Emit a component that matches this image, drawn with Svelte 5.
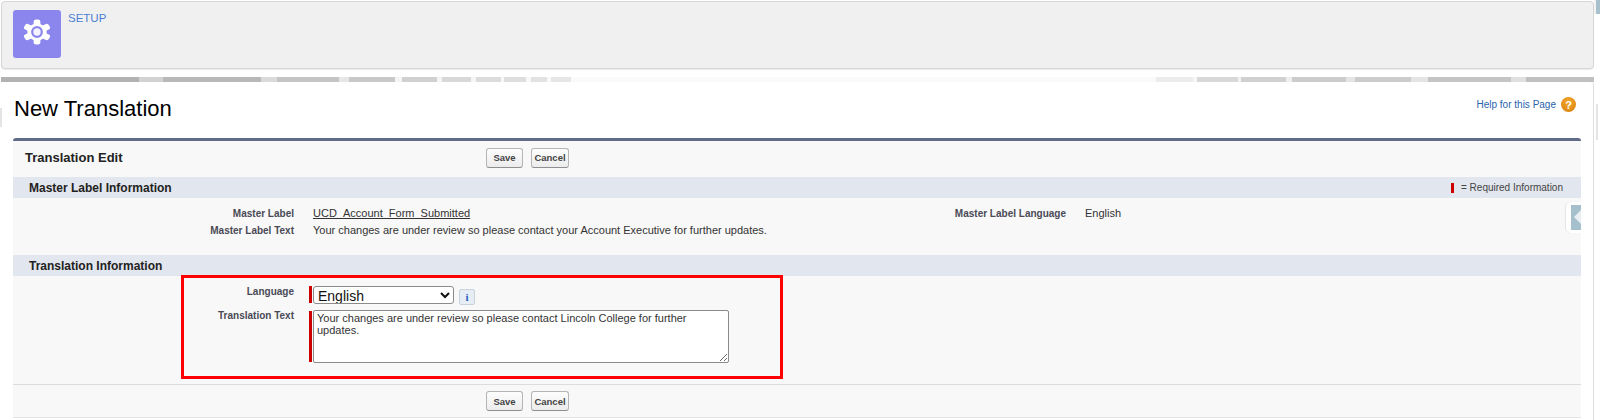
<script>
  const stripeNote = '= Required Information';
  const lobes = [0, 60, 120, 180, 240, 300];
</script>

<div class="page">
  <span class="corner-tab"></span>
  <span class="edge edge--left"></span>
  <span class="edge edge--right"></span>

  <header class="setup">
    <div class="setup__icon">
      <svg viewBox="-16 -16 32 32" width="32" height="32" aria-hidden="true">
        <g fill="#fff" transform="scale(1.13 1)">
          <circle r="8.6" />
          {#each lobes as angle}
            <rect x="-3" y="-12.5" width="6" height="7" rx="2.2" transform="rotate({angle})" />
          {/each}
        </g>
        <circle r="4.8" fill="#f4f3ff" stroke="#8b85ee" stroke-width="2.2" />
      </svg>
    </div>
    <a class="setup__link" href="#setup">SETUP</a>
  </header>

  <div class="stripes"></div>

  <main class="card">
    <div class="title-row">
      <h1>New Translation</h1>
      <div class="help">
        <a href="#help">Help for this Page</a>
        <span class="help__icon">?</span>
      </div>
    </div>

    <section class="block">
      <div class="buttons buttons--top">
        <h2>Translation Edit</h2>
        <div class="buttons__group">
          <button type="button" class="save">Save</button>
          <button type="button" class="cancel">Cancel</button>
        </div>
      </div>

      <div class="section-head">
        <h3>Master Label Information</h3>
        <span class="legend"><i></i>{stripeNote}</span>
      </div>

      <div class="details">
        <span class="label">Master Label</span>
        <a class="value value--link" href="#label">UCD_Account_Form_Submitted</a>
        <span class="label">Master Label Language</span>
        <span class="value">English</span>
        <span class="label">Master Label Text</span>
        <span class="value value--wide">Your changes are under review so please contact your Account Executive for further updates.</span>
        <span class="handle"><b></b></span>
      </div>

      <div class="section-head">
        <h3>Translation Information</h3>
      </div>

      <div class="form">
        <span class="label label--form">Language</span>
        <div class="field">
          <i class="req req--select"></i>
          <select>
            <option>English</option>
          </select>
          <span class="info">i</span>
        </div>
        <span class="label label--form">Translation Text</span>
        <div class="field">
          <i class="req req--text"></i>
          <textarea>Your changes are under review so please contact Lincoln College for further updates.</textarea>
        </div>
        <div class="highlight"></div>
      </div>

      <div class="buttons buttons--bottom">
        <div class="buttons__group">
          <button type="button" class="save">Save</button>
          <button type="button" class="cancel">Cancel</button>
        </div>
      </div>
    </section>
  </main>
</div>

<style>
  :global(body) {
    margin: 0;
    background: #fff;
    font-family: 'Liberation Sans', Arial, sans-serif;
  }

  .page {
    position: relative;
    width: 1600px;
    height: 420px;
    overflow: hidden;
    box-sizing: border-box;
    padding: 1px 6px 0 1px;
  }

  .corner-tab {
    position: absolute;
    top: 0;
    right: 0;
    width: 4px;
    height: 14px;
    background: #a9c1cc;
    border-left: 2px solid #f3f3f3;
  }

  .edge {
    position: absolute;
    background: #e4e4e4;
  }

  .edge--left {
    top: 108px;
    left: 0;
    width: 2px;
    height: 19px;
  }

  .edge--right {
    top: 104px;
    right: 2px;
    width: 2px;
    height: 36px;
  }

  .setup {
    display: flex;
    gap: 7px;
    height: 68px;
    box-sizing: border-box;
    padding: 8px 11px;
    background: #f0f0f0;
    border: 1px solid #d6d6d6;
    border-radius: 4px;
    box-shadow: 0 1px 1px rgba(0, 0, 0, 0.08);
  }

  .setup__icon {
    display: flex;
    align-items: center;
    justify-content: center;
    width: 48px;
    height: 48px;
    box-sizing: border-box;
    padding-bottom: 4px;
    background: #8b85ee;
    border-radius: 3px;
  }

  .setup__link {
    color: #4a7fd4;
    font-size: 11.5px;
    line-height: 16px;
    text-decoration: none;
  }

  .stripes {
    height: 5px;
    margin-top: 8px;
    background: linear-gradient(
      90deg,
      #b2b2b2 0 138px,
      #d2d2d2 138px 162px,
      #b8b8b8 162px 260px,
      #dadada 260px 276px,
      #c4c4c4 276px 338px,
      #e6e6e6 338px 348px,
      #c8c8c8 348px 394px,
      #f4f4f4 394px 401px,
      #d0d0d0 401px 436px,
      #f4f4f4 436px 441px,
      #d8d8d8 441px 470px,
      #f6f6f6 470px 475px,
      #dcdcdc 475px 500px,
      #f8f8f8 500px 503px,
      #dedede 503px 525px,
      #f8f8f8 525px 530px,
      #e2e2e2 530px 546px,
      #f8f8f8 546px 550px,
      #e6e6e6 550px 570px,
      #fafafa 570px 1155px,
      #ececec 1155px 1192px,
      #f6f6f6 1192px 1196px,
      #d8d8d8 1196px 1237px,
      #f2f2f2 1237px 1240px,
      #d0d0d0 1240px 1285px,
      #eee 1285px 1291px,
      #ccc 1291px 1345px,
      #e4e4e4 1345px 1354px,
      #ccc 1354px 1410px,
      #e4e4e4 1410px 1427px,
      #c4c4c4 1427px 1510px,
      #e0e0e0 1510px 1525px,
      #c0c0c0 1525px
    );
  }

  .card {
    height: 338px;
    box-sizing: border-box;
    padding: 0 12px;
    background: #fff;
    border-radius: 4px 4px 0 0;
    border-right: 1px solid #ddd;
  }

  .title-row {
    display: flex;
    align-items: flex-start;
    justify-content: space-between;
    height: 56px;
    padding-left: 1px;
  }

  h1 {
    margin: 14px 0 0;
    color: #000;
    font-size: 22px;
    font-weight: 400;
    line-height: 26px;
  }

  .help {
    display: flex;
    align-items: center;
    gap: 5px;
    margin: 15px 5px 0 0;
    font-size: 10px;
  }

  .help a {
    color: #2a63ab;
    text-decoration: none;
  }

  .help__icon {
    display: flex;
    align-items: center;
    justify-content: center;
    width: 15px;
    height: 15px;
    color: #fff;
    font-size: 11px;
    font-weight: 700;
    background: radial-gradient(circle at 50% 35%, #f2a72e, #d97f0a);
    border-radius: 50%;
  }

  .block {
    background: #f8f8f8;
    border-top: 3px solid #5f6b87;
    border-radius: 3px 3px 0 0;
    border-bottom: 1px solid #e4e4e4;
  }

  .buttons {
    display: flex;
    align-items: center;
    box-sizing: border-box;
    padding-left: 473px;
  }

  .buttons--top {
    height: 33px;
    margin-bottom: 3px;
    padding-left: 12px;
  }

  .buttons--top h2 {
    width: 461px;
    margin: 0;
    color: #222;
    font-size: 13px;
    font-weight: 700;
  }

  .buttons--bottom {
    height: 33px;
    border-top: 1px solid #dcdcdc;
  }

  .buttons__group {
    display: flex;
    gap: 8px;
  }

  button {
    height: 20px;
    padding: 0;
    color: #444;
    font-family: inherit;
    font-size: 9.5px;
    font-weight: 700;
    background: linear-gradient(#fdfdfd, #ececec);
    border: 1px solid #b5b5b5;
    border-bottom-color: #8f8f8f;
    border-radius: 3px;
  }

  .save {
    width: 37px;
  }

  .cancel {
    width: 38px;
  }

  .section-head {
    display: flex;
    align-items: center;
    justify-content: space-between;
    height: 21px;
    padding: 0 18px 0 16px;
    background: #e2e6ee;
  }

  h3 {
    margin: 0;
    color: #222;
    font-size: 12px;
    font-weight: 700;
  }

  .legend {
    display: flex;
    align-items: center;
    color: #444;
    font-size: 10px;
  }

  .legend i {
    width: 3px;
    height: 10px;
    margin-right: 7px;
    background: #c00;
  }

  .details,
  .form {
    position: relative;
    display: grid;
    align-items: start;
  }

  .details {
    grid-template-columns: 281px 616px 156px 1fr;
    grid-auto-rows: 17px;
    height: 57px;
    box-sizing: border-box;
    padding-top: 8px;
  }

  .label {
    color: #4a4a56;
    font-size: 10px;
    font-weight: 700;
    line-height: 15px;
    text-align: right;
  }

  .value {
    padding-left: 19px;
    color: #333;
    font-size: 11px;
    line-height: 15px;
  }

  .value--link {
    color: #333;
    text-decoration: underline;
  }

  .value--wide {
    grid-column: 2 / 5;
  }

  .handle {
    position: absolute;
    top: 4px;
    right: 0;
    width: 15px;
    height: 31px;
    box-sizing: border-box;
    padding: 3px 0 3px 5px;
    background: #fff;
    border-radius: 5px 0 0 5px;
    box-shadow: -1px 0 1px rgba(0, 0, 0, 0.08);
  }

  .handle b {
    position: relative;
    display: block;
    height: 100%;
    background: #a5c0cc;
  }

  .handle b::after {
    content: '';
    position: absolute;
    top: 5px;
    right: 0;
    border-top: 7px solid transparent;
    border-bottom: 7px solid transparent;
    border-right: 7px solid #e8eef1;
  }

  .form {
    grid-template-columns: 281px 1fr;
    grid-template-rows: 24px 1fr;
    height: 108px;
    box-sizing: border-box;
    padding-top: 10px;
  }

  .label--form {
    margin-top: -2px;
  }

  .field {
    position: relative;
    display: flex;
    align-items: flex-start;
    padding-left: 19px;
  }

  .req {
    position: absolute;
    left: 15px;
    width: 3px;
    background: #c00;
  }

  .req--select {
    top: 0;
    height: 17px;
  }

  .req--text {
    top: 1px;
    height: 51px;
  }

  select {
    width: 141px;
    height: 18px;
    box-sizing: border-box;
    padding: 0;
    color: #111;
    font-family: inherit;
    font-size: 14px;
    background: #fff;
    border: 1px solid #8a8a8a;
    border-radius: 3px;
  }

  .info {
    width: 14px;
    height: 14px;
    margin: 3px 0 0 5px;
    color: #2a5fc0;
    font-family: 'Liberation Serif', serif;
    font-size: 11px;
    font-weight: 700;
    line-height: 14px;
    text-align: center;
    background: #e6edf5;
    border: 1px solid #c9d3de;
    border-radius: 2px;
  }

  textarea {
    display: block;
    width: 416px;
    height: 53px;
    box-sizing: border-box;
    padding: 1px 30px 2px 3px;
    color: #333;
    font-family: inherit;
    font-size: 11px;
    line-height: 12px;
    background: #fff;
    border: 1px solid #8a8a8a;
    border-radius: 2px;
  }

  .highlight {
    position: absolute;
    top: -1px;
    left: 168px;
    width: 602px;
    height: 104px;
    box-sizing: border-box;
    border: 3px solid #f00;
    pointer-events: none;
  }
</style>
